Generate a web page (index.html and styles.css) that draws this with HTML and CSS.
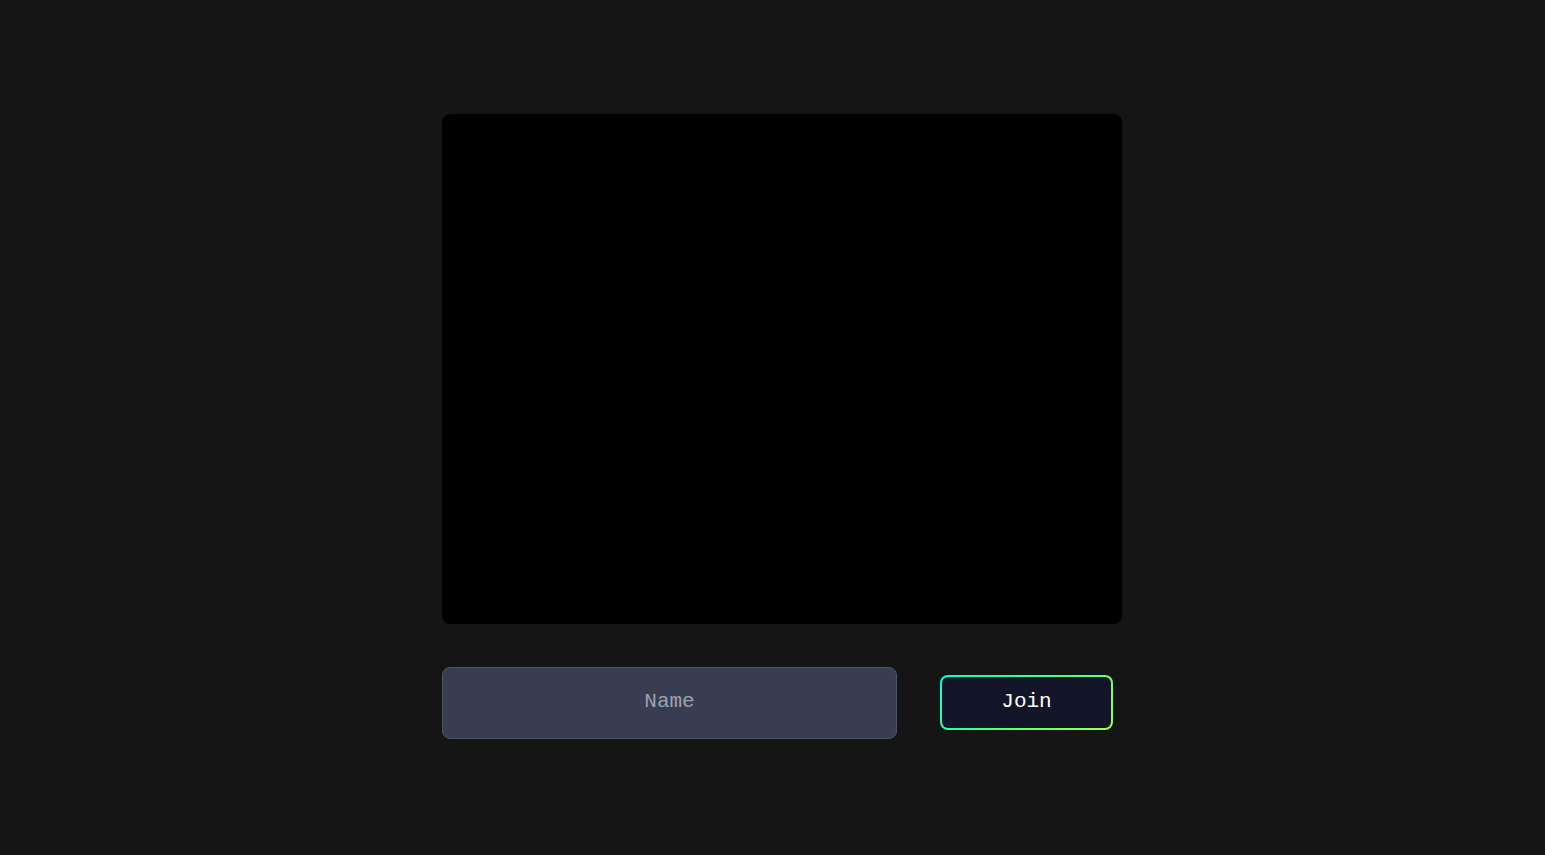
FILE: index.html
```html
<!DOCTYPE html>
<html lang="en">
<head>
<meta charset="utf-8">
<meta name="viewport" content="width=device-width, initial-scale=1">
<title>Join</title>
<link rel="stylesheet" href="styles.css">
</head>
<body>
<main class="lobby">
  <video class="preview" aria-label="Camera preview"></video>
  <form class="join-form">
    <input class="name-input" type="text" placeholder="Name" aria-label="Name">
    <button class="join-button" type="button"><span class="join-label">Join</span></button>
  </form>
</main>
</body>
</html>
```

FILE: styles.css
```css
* {
  box-sizing: border-box;
}

body {
  margin: 0;
  background: #151515;
  font-family: "Liberation Mono", monospace;
}

.lobby {
  width: min(699px, 90%);
  min-height: 100vh;
  margin: 0 auto;
  padding: 0 0 3px 19px;
  display: flex;
  flex-direction: column;
  justify-content: center;
  gap: 43px;
}

.preview {
  display: block;
  width: 100%;
  aspect-ratio: 4 / 3;
  background: #000;
  border-radius: 8px;
}

.join-form {
  display: flex;
  align-items: center;
  gap: 43px;
  padding-right: 9px;
}

.name-input {
  flex: 1;
  min-width: 0;
  padding: 19px 24px 21px;
  border: 1px solid #4b5563;
  border-radius: 8px;
  background: #393d51;
  color: #fff;
  font-family: inherit;
  font-size: 21px;
  line-height: 30px;
  text-align: center;
}

.name-input::placeholder {
  color: #9ca3af;
}

.join-button {
  min-width: 173px;
  padding: 2px;
  border: 0;
  border-radius: 8px;
  background: linear-gradient(144deg, #00ffdd, #4cff88 50%, #a8ff48);
  color: #fff;
  font-family: inherit;
  font-size: 21px;
  line-height: 25px;
  cursor: pointer;
}

.join-label {
  display: block;
  padding: 12px 48px 14px;
  border-radius: 6px;
  background: #131528;
}
```
